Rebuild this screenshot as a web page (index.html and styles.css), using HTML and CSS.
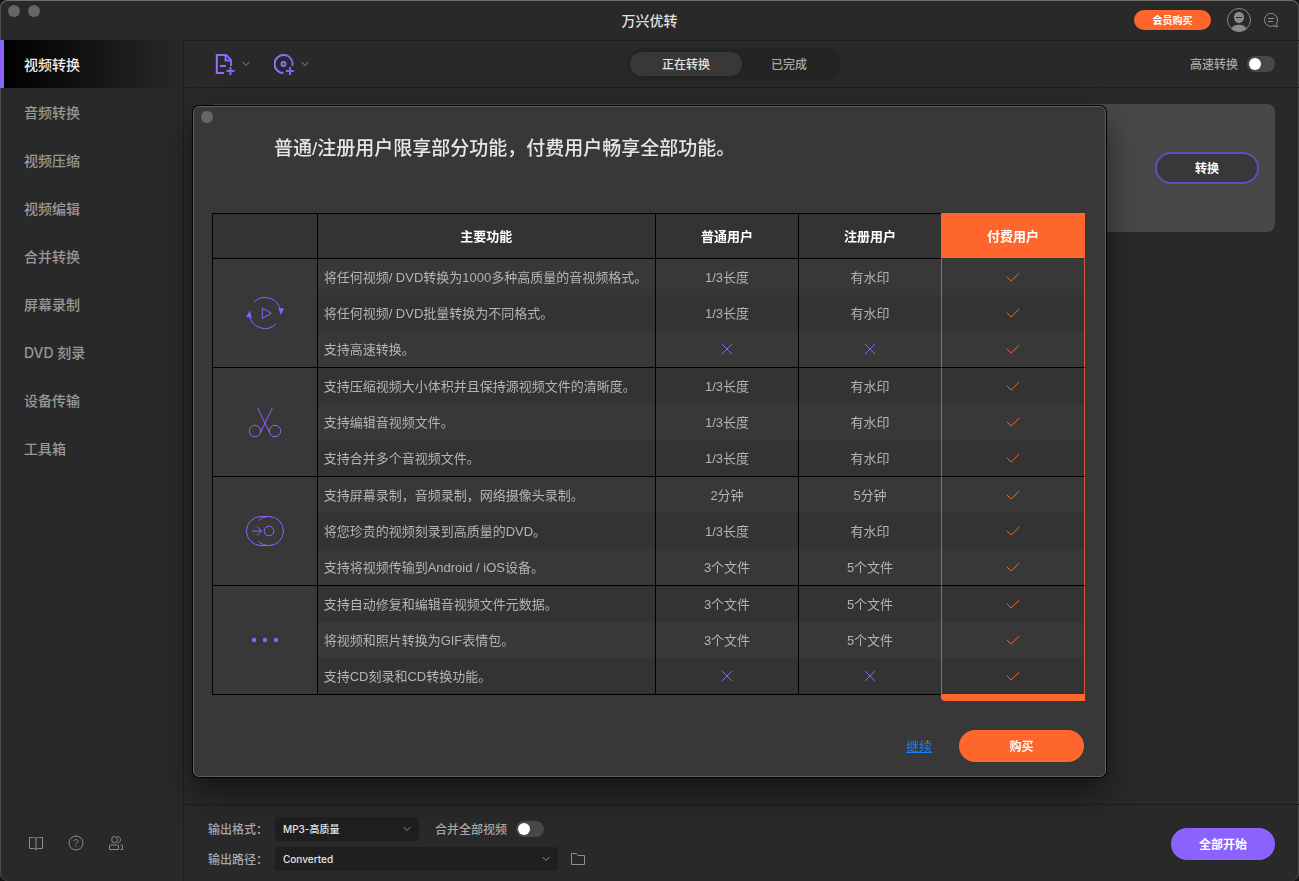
FILE: index.html
```html
<!DOCTYPE html>
<html lang="zh-CN">
<head>
  <meta charset="UTF-8">
  <meta name="viewport" content="width=device-width, initial-scale=1.0">
  <title>万兴优转</title>
  <link rel="stylesheet" href="styles.css">
</head>
<body>
  <!-- Shared icons -->
  <svg class="sprite" aria-hidden="true">
    <symbol id="check" viewBox="0 0 14 10"><path d="M.7 4.8 5.2 9 13.3 1"/></symbol>
    <symbol id="cross" viewBox="0 0 12 12"><path d="M1 1l10 10M11 1 1 11"/></symbol>
    <symbol id="chevron" viewBox="0 0 8 6"><path d="M.7 1 4 4.5 7.3 1"/></symbol>
  </svg>

  <div class="app">
    <header class="titlebar">
      <div class="window-dots">
        <span class="dot"></span>
        <span class="dot"></span>
      </div>
      <h1>万兴优转</h1>
      <div class="account">
        <button class="vip-btn">会员购买</button>
        <button class="icon-btn avatar" aria-label="账户">
          <svg width="24" height="24" viewBox="0 0 24 24">
            <circle cx="12" cy="12" r="11.5" fill="none" stroke="#8a8a8a"/>
            <path d="M12 4c3 0 5 2.200 5 5.200S15 15 12 15s-5-2.800-5-5.800S9 4 12 4zM4.500 20.500C6 17.600 8.500 16.800 12 16.800s6 .800 7.500 3.700C17.500 22.400 15 23.500 12 23.500s-5.500-1.100-7.500-3z" fill="#8a8a8a"/>
            <path d="M9 9.500h6" stroke="#292929"/>
          </svg>
        </button>
        <button class="icon-btn" aria-label="反馈">
          <svg width="16" height="16" viewBox="0 0 16 16" fill="none" stroke="#8f8f8f">
            <path d="M11.500 13.400A6.500 6.500 0 1 1 14.500 8c0 1.500-.500 2.900-1.400 4l1.400 2.500h-3zM5 6.500h6M5 9.500h5"/>
          </svg>
        </button>
      </div>
    </header>

    <div class="main">
      <aside class="sidebar">
        <nav>
          <a class="active" href="#">视频转换</a>
          <a href="#">音频转换</a>
          <a href="#">视频压缩</a>
          <a href="#">视频编辑</a>
          <a href="#">合并转换</a>
          <a href="#">屏幕录制</a>
          <a href="#">DVD 刻录</a>
          <a href="#">设备传输</a>
          <a href="#">工具箱</a>
        </nav>
        <div class="sidebar-tools">
          <button class="icon-btn" aria-label="指南">
            <svg width="16" height="16" viewBox="0 0 16 16"><path d="M8 3v12M8 3.500C7 2.500 6 2.500 4.500 2.500h-3v11h4c1.200 0 2 .300 2.500 1 .500-.700 1.300-1 2.500-1h4v-11h-3C10 2.500 9 2.500 8 3.500z"/></svg>
          </button>
          <button class="icon-btn" aria-label="帮助">
            <svg width="16" height="16" viewBox="0 0 16 16"><circle cx="8" cy="8" r="7"/><path d="M6 6.300C6 3.800 10 3.900 10 6.200 10 7.700 8 7.600 8 9.500M8 10.800v1.200"/></svg>
          </button>
          <button class="icon-btn" aria-label="用户">
            <svg width="16" height="16" viewBox="0 0 16 16"><ellipse cx="6.500" cy="4.700" rx="2.800" ry="3.200"/><path d="M9.500 1.500c4 0 4 6.400 0 6.400M1.500 14.500V11c0-.600.400-1 1-1h7c.600 0 1 .400 1 1v3.500zM12.500 10h1c.600 0 1 .400 1 1v3.500h-2"/></svg>
          </button>
        </div>
      </aside>

      <section class="workspace">
        <div class="toolbar">
          <div class="add-tools">
            <button class="icon-btn add-btn" aria-label="添加文件">
              <svg class="add-icon" width="20" height="22" viewBox="0 0 20 22">
                <defs>
                  <linearGradient id="violet" gradientUnits="userSpaceOnUse" x1="0" y1="0" x2="20" y2="0">
                    <stop offset="0" stop-color="#a070f5"/>
                    <stop offset="1" stop-color="#6868ff"/>
                  </linearGradient>
                </defs>
                <path d="M9 20H1.800V2h9.400L16 7v6M10.500 2v5.500H16M5 13h6M15.500 14v8M11.500 18h8"/>
              </svg>
              <svg class="chevron" width="8" height="6"><use href="#chevron"/></svg>
            </button>
            <button class="icon-btn add-btn" aria-label="添加光盘">
              <svg class="add-icon" width="20" height="22" viewBox="0 0 20 22">
                <path d="M9.500 20A9 9 0 1 1 18.300 13M16 14v8M12 18h8"/>
                <circle cx="9.500" cy="11" r="2"/>
              </svg>
              <svg class="chevron" width="8" height="6"><use href="#chevron"/></svg>
            </button>
          </div>
          <div class="tabs">
            <button class="tab selected">正在转换</button>
            <button class="tab">已完成</button>
          </div>
          <label class="switch-label speed"><span>高速转换</span> <input class="switch" type="checkbox"></label>
        </div>

        <div class="file-list">
          <div class="file-card">
            <button class="convert-btn">转换</button>
          </div>
        </div>

        <footer class="output">
          <div class="output-form">
            <div class="output-row">
              <label class="output-label" for="format">输出格式：</label>
              <div class="select-box format">
                <select id="format"><option>MP3-高质量</option></select>
                <svg class="chevron" width="8" height="6"><use href="#chevron"/></svg>
              </div>
              <label class="switch-label"><span>合并全部视频</span> <input class="switch" type="checkbox"></label>
            </div>
            <div class="output-row">
              <label class="output-label" for="path">输出路径：</label>
              <div class="select-box path">
                <select id="path"><option>Converted</option></select>
                <svg class="chevron" width="8" height="6"><use href="#chevron"/></svg>
              </div>
              <button class="icon-btn folder" aria-label="打开文件夹">
                <svg width="14" height="14" viewBox="0 0 14 14"><path d="M.5 12.500v-11h4.800L7 3.500h6.500v9z"/></svg>
              </button>
            </div>
          </div>
          <button class="start-btn">全部开始</button>
        </footer>
      </section>
    </div>
  </div>

  <!-- Plan comparison dialog -->
  <div class="overlay">
    <div class="dialog" role="dialog" aria-labelledby="dialog-title">
      <button class="dot" aria-label="关闭"></button>
      <h2 id="dialog-title">普通/注册用户限享部分功能，付费用户畅享全部功能。</h2>

      <table class="plans">
        <colgroup>
          <col class="col-icon">
          <col class="col-feature">
          <col class="col-plan">
          <col class="col-registered">
          <col class="col-paid">
        </colgroup>
        <thead>
          <tr>
            <th></th>
            <th>主要功能</th>
            <th>普通用户</th>
            <th>注册用户</th>
            <th>付费用户</th>
          </tr>
        </thead>
        <tbody>
          <tr>
            <td class="group-icon" rowspan="3">
              <svg width="40" height="36" viewBox="0 0 40 36">
                <path d="M9.200 7A15.500 15.500 0 0 1 35.500 16M4.500 20A15.500 15.500 0 0 0 31 28.800M17.300 13v10.500l9-5.200z"/>
                <path class="solid" d="M33.500 13l5.500.500-3.200 6.500zM5 15.500 1 22l5.500.500z"/>
              </svg>
            </td>
            <td class="feature">将任何视频/ DVD转换为1000多种高质量的音视频格式。</td>
            <td>1/3长度</td>
            <td>有水印</td>
            <td><svg class="check" width="14" height="10"><use href="#check"/></svg></td>
          </tr>
          <tr>
            <td class="feature">将任何视频/ DVD批量转换为不同格式。</td>
            <td>1/3长度</td>
            <td>有水印</td>
            <td><svg class="check" width="14" height="10"><use href="#check"/></svg></td>
          </tr>
          <tr class="group-end">
            <td class="feature">支持高速转换。</td>
            <td><svg class="cross" width="12" height="12"><use href="#cross"/></svg></td>
            <td><svg class="cross" width="12" height="12"><use href="#cross"/></svg></td>
            <td><svg class="check" width="14" height="10"><use href="#check"/></svg></td>
          </tr>
          <tr>
            <td class="group-icon" rowspan="3">
              <svg width="40" height="36" viewBox="0 0 40 36">
                <path d="M12.700 4 24.500 28.500M27.300 4 15.500 28.500"/>
                <circle cx="10" cy="27" r="5.700"/>
                <circle cx="30" cy="27" r="5.700"/>
              </svg>
            </td>
            <td class="feature">支持压缩视频大小体积并且保持源视频文件的清晰度。</td>
            <td>1/3长度</td>
            <td>有水印</td>
            <td><svg class="check" width="14" height="10"><use href="#check"/></svg></td>
          </tr>
          <tr>
            <td class="feature">支持编辑音视频文件。</td>
            <td>1/3长度</td>
            <td>有水印</td>
            <td><svg class="check" width="14" height="10"><use href="#check"/></svg></td>
          </tr>
          <tr class="group-end">
            <td class="feature">支持合并多个音视频文件。</td>
            <td>1/3长度</td>
            <td>有水印</td>
            <td><svg class="check" width="14" height="10"><use href="#check"/></svg></td>
          </tr>
          <tr>
            <td class="group-icon" rowspan="3">
              <svg width="40" height="36" viewBox="0 0 40 36">
                <path d="M24 3.500h-8a14.500 14.500 0 0 0 0 29h8M13.500 7.500c3-2.600 6.500-4 10.500-4a14.500 14.500 0 0 1 0 29c-4 0-7.500-1.400-10.500-4M7 18h9.500M12 13.500l4.500 4.500-4.500 4.500"/>
                <circle cx="24" cy="18" r="4.800"/>
              </svg>
            </td>
            <td class="feature">支持屏幕录制，音频录制，网络摄像头录制。</td>
            <td>2分钟</td>
            <td>5分钟</td>
            <td><svg class="check" width="14" height="10"><use href="#check"/></svg></td>
          </tr>
          <tr>
            <td class="feature">将您珍贵的视频刻录到高质量的DVD。</td>
            <td>1/3长度</td>
            <td>有水印</td>
            <td><svg class="check" width="14" height="10"><use href="#check"/></svg></td>
          </tr>
          <tr class="group-end">
            <td class="feature">支持将视频传输到Android / iOS设备。</td>
            <td>3个文件</td>
            <td>5个文件</td>
            <td><svg class="check" width="14" height="10"><use href="#check"/></svg></td>
          </tr>
          <tr>
            <td class="group-icon" rowspan="3">
              <svg width="40" height="36" viewBox="0 0 40 36">
                <g class="solid">
                  <circle cx="9" cy="18" r="2.200"/>
                  <circle cx="20" cy="18" r="2.200"/>
                  <circle cx="31" cy="18" r="2.200"/>
                </g>
              </svg>
            </td>
            <td class="feature">支持自动修复和编辑音视频文件元数据。</td>
            <td>3个文件</td>
            <td>5个文件</td>
            <td><svg class="check" width="14" height="10"><use href="#check"/></svg></td>
          </tr>
          <tr>
            <td class="feature">将视频和照片转换为GIF表情包。</td>
            <td>3个文件</td>
            <td>5个文件</td>
            <td><svg class="check" width="14" height="10"><use href="#check"/></svg></td>
          </tr>
          <tr class="group-end">
            <td class="feature">支持CD刻录和CD转换功能。</td>
            <td><svg class="cross" width="12" height="12"><use href="#cross"/></svg></td>
            <td><svg class="cross" width="12" height="12"><use href="#cross"/></svg></td>
            <td><svg class="check" width="14" height="10"><use href="#check"/></svg></td>
          </tr>
        </tbody>
      </table>

      <div class="dialog-actions">
        <a href="#">继续</a>
        <button class="buy-btn">购买</button>
      </div>
    </div>
  </div>
</body>
</html>
```
FILE: styles.css
```css
* {
  box-sizing: border-box;
}

body {
  margin: 0;
  background-color: #151515;
  color: #a8a8a8;
  font-family: Inter, "Noto Sans CJK SC", sans-serif;
  font-size: 12px;
  line-height: 20px;
}

button, select {
  font: inherit;
  color: inherit;
  border: none;
  padding: 2px 0 0;
  cursor: pointer;
}

h1, h2 {
  margin: 0;
  font-weight: 500;
}

svg {
  display: block;
}

.sprite {
  display: none;
}

.app {
  display: flex;
  flex-direction: column;
  min-height: 100vh;
  background-color: #292929;
  border-radius: 8px;
  box-shadow: inset 0 1px #707070, inset 1px 0 #4a4a4a, inset -1px 0 #4a4a4a;
}

.icon-btn {
  padding: 0;
  background: none;
}

.dot {
  width: 12px;
  height: 12px;
  border-radius: 50%;
  background-color: #666;
}

.chevron {
  fill: none;
  stroke: #8a8a8a;
}

/* Title bar */
.titlebar {
  display: grid;
  grid-template-columns: 1fr auto 1fr;
  align-items: center;
  height: 41px;
  padding: 0 8px;
  border-bottom: 1px solid #1e1e1e;
}

.titlebar h1 {
  padding-top: 2px;
  font-size: 14px;
  color: #e0e0e0;
}

.window-dots {
  display: flex;
  gap: 8px;
  align-self: start;
  padding-top: 5px;
}

.account {
  display: flex;
  align-items: center;
  justify-content: flex-end;
  padding-right: 12px;
}

.vip-btn {
  width: 77px;
  height: 20px;
  margin-right: 16px;
  padding: 0;
  border-radius: 10px;
  background-color: #ff662e;
  color: #fff;
  font-size: 10px;
  font-weight: 700;
}

.avatar {
  margin-right: 12px;
}

/* Sidebar */
.main {
  display: flex;
  flex: 1;
}

.sidebar {
  display: flex;
  flex-direction: column;
  justify-content: space-between;
  width: 184px;
  margin-top: -1px;
  border-right: 1px solid #1e1e1e;
}

.sidebar a {
  display: flex;
  align-items: center;
  height: 48px;
  padding: 2px 0 0 24px;
  color: #989898;
  font-size: 14px;
  font-weight: 500;
  text-decoration: none;
}

.sidebar a.active {
  padding-left: 20px;
  border-left: 4px solid #8c62ff;
  background: linear-gradient(to right, #000, #292929);
  color: #f0f0f0;
}

.sidebar-tools {
  display: flex;
  gap: 24px;
  padding: 0 28px 30px;
}

.sidebar-tools svg, .folder svg {
  fill: none;
  stroke: #8f8f8f;
}

/* Workspace */
.workspace {
  display: flex;
  flex-direction: column;
  flex: 1;
}

.toolbar {
  display: grid;
  grid-template-columns: 1fr auto 1fr;
  align-items: center;
  height: 47px;
  padding: 0 24px 0 9px;
  border-bottom: 1px solid #1e1e1e;
}

.add-tools {
  display: flex;
  gap: 24px;
  padding-left: 22px;
}

.add-btn {
  display: flex;
  align-items: center;
  gap: 7px;
}

.add-icon {
  fill: none;
  stroke: url(#violet);
  stroke-width: 2;
}

.tabs {
  display: flex;
  padding: 4px 5px 4px 3px;
  border-radius: 16px;
  background-color: #242424;
}

.tab {
  width: 94px;
  height: 24px;
  border-radius: 12px;
  background: none;
  font-weight: 500;
}

.tab.selected {
  width: 112px;
  background-color: #383838;
  color: #e6e6e6;
}

.switch-label {
  display: flex;
  align-items: center;
  gap: 9px;
  font-weight: 500;
}

.switch-label span {
  padding-top: 2px;
}

.speed {
  justify-self: end;
}

.switch {
  appearance: none;
  width: 28px;
  height: 16px;
  margin: 0;
  padding: 2px;
  border-radius: 8px;
  background-color: #484848;
}

.switch::before {
  content: "";
  display: block;
  width: 12px;
  height: 12px;
  border-radius: 50%;
  background-color: #fff;
}

.switch:checked {
  padding-left: 14px;
  background-color: #8c62ff;
}

.file-list {
  flex: 1;
  padding: 16px 24px;
}

.file-card {
  display: flex;
  align-items: center;
  justify-content: flex-end;
  height: 128px;
  padding: 0 16px;
  border-radius: 8px;
  background-color: #484848;
}

.convert-btn, .start-btn {
  width: 104px;
  height: 32px;
  border-radius: 16px;
  color: #fff;
  font-weight: 700;
}

.convert-btn {
  border: 2px solid #6b48c0;
  background-color: #383838;
}

.start-btn {
  background-color: #8c62ff;
}

/* Output settings */
.output {
  display: flex;
  align-items: center;
  justify-content: space-between;
  padding: 12px 24px 10px;
  border-top: 1px solid #1e1e1e;
}

.output-form {
  display: flex;
  flex-direction: column;
  gap: 6px;
}

.output-row {
  display: flex;
  align-items: center;
  height: 24px;
}

.output-label {
  width: 67px;
  padding-top: 2px;
  font-weight: 500;
}

.select-box {
  display: grid;
  align-items: center;
  height: 24px;
  border-radius: 4px;
  background-color: #1f1f1f;
}

.select-box select, .select-box svg {
  grid-area: 1 / 1;
}

.select-box select {
  appearance: none;
  height: 24px;
  padding: 0 24px 0 8px;
  background: none;
  color: #e6e6e6;
  font-size: 10px;
  font-weight: 500;
}

.select-box svg {
  justify-self: end;
  margin-right: 8px;
  pointer-events: none;
}

.format {
  width: 144px;
  margin-right: 16px;
}

.path {
  width: 283px;
  margin-right: 13px;
}

/* Dialog */
.overlay {
  position: fixed;
  inset: 0;
  display: flex;
  align-items: center;
  justify-content: center;
  padding-top: 2px;
}

.dialog {
  width: 100%;
  max-width: 913px;
  padding: 4px 20px 14px 18px;
  border: 1px solid #606060;
  border-radius: 6px;
  background-color: #383838;
  box-shadow: 0 0 0 1px #000, 0 16px 32px rgba(0, 0, 0, 0.5);
}

.dialog > .dot {
  display: block;
  margin-left: -11px;
}

.dialog h2 {
  padding: 12px 0 50px 62px;
  color: #e6e6e6;
  font-family: "Liberation Sans", "Noto Sans CJK SC", sans-serif;
  font-size: 19px;
  line-height: 28px;
}

.plans {
  width: 100%;
  table-layout: fixed;
  border-spacing: 0;
  border-left: 1px solid #000;
  font-family: "Liberation Sans", "Noto Sans CJK SC", sans-serif;
  font-size: 13px;
  color: #b4b4b4;
}

.col-icon {
  width: 12%;
}

.col-plan {
  width: 143px;
}

.col-registered {
  width: 142px;
}

.col-paid {
  width: 144px;
}

.plans th {
  height: 46px;
  padding: 2px 0 0;
  border: solid #000;
  border-width: 1px 1px 1px 0;
  background-color: #333;
  color: #fff;
}

.plans td {
  position: relative;
  height: 36px;
  padding: 2px 0 0;
  border-right: 1px solid #000;
  text-align: center;
}

.plans tbody tr:nth-child(even) {
  background-color: #333;
}

.plans .group-end td {
  height: 37px;
}

.plans .group-end td, .plans .group-icon {
  border-bottom: 1px solid #000;
}

.plans .group-icon {
  background-color: #383838;
}

.plans .feature {
  padding-left: 6px;
  text-align: left;
  white-space: nowrap;
}

.plans svg {
  margin: -2px auto 0;
  fill: none;
  stroke: #8c62ff;
}

.plans .solid {
  fill: #8c62ff;
  stroke: none;
}

.plans .check {
  stroke: #ff662e;
}

/* Highlighted column for paying users */
.plans td:nth-last-child(2), .plans th:nth-last-child(2) {
  border-right: none;
}

.plans td:last-child {
  border-left: 1px solid #d0592f;
  border-right-color: #d0592f;
}

.plans th:last-child {
  border-color: #ff662e #ff662e #383838;
  border-left-width: 1px;
  background-color: #ff662e;
}

.plans tr:last-child td:last-child::after {
  content: "";
  position: absolute;
  top: 36px;
  left: -1px;
  right: -1px;
  height: 7px;
  border-bottom-left-radius: 4px;
  background-color: #ff662e;
}

.dialog-actions {
  display: flex;
  align-items: center;
  justify-content: flex-end;
  gap: 27px;
  padding: 35px 1px 0 0;
}

.dialog-actions a {
  color: #1a80f5;
  font-size: 13px;
}

.buy-btn {
  width: 125px;
  height: 32px;
  border-radius: 16px;
  background-color: #ff662e;
  color: #fff;
  font-weight: 700;
}
```
